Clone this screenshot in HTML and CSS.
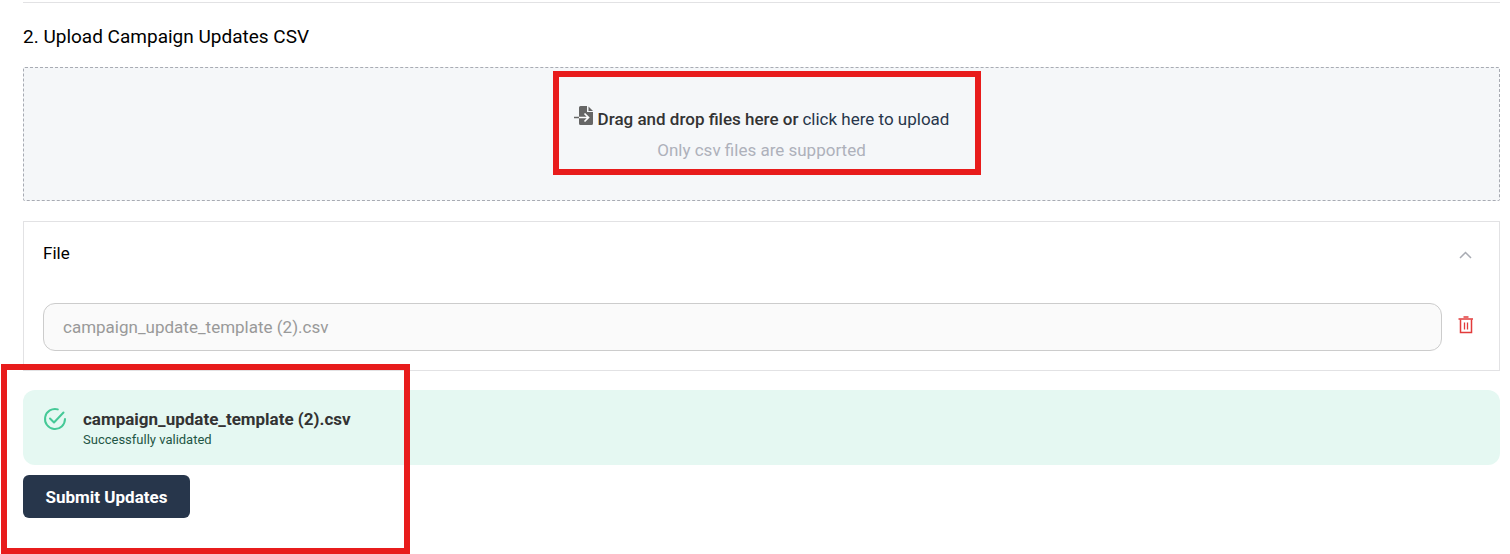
FILE: index.html
```html
<!DOCTYPE html>
<html lang="en">
<head>
  <meta charset="UTF-8" />
  <meta name="viewport" content="width=device-width, initial-scale=1.0"/>
  <title>Upload Campaign Updates</title>
  <link rel="stylesheet" href="styles.css">
</head>
<body>
  <main class="upload-step">
    <h2>2. Upload Campaign Updates CSV</h2>

    <div class="dropzone">
      <div class="drop-text">
        <svg class="import-icon" width="20" height="20" viewBox="0 0 20 20" aria-hidden="true">
          <path d="M6.500 0H13v6h6v11.500a1.500 1.500 0 0 1-1.500 1.500h-11A1.500 1.500 0 0 1 5 17.500v-16A1.500 1.500 0 0 1 6.500 0z" fill="#666"/>
          <path d="M14.500 0.500L19 5h-4.500z" fill="#666"/>
          <path d="M0 11.500h5" stroke="#666" stroke-width="1.500"/>
          <path d="M5 11.500h9M10.500 7.500l4 4-4 4" fill="none" stroke="#fff" stroke-width="1.700"/>
        </svg>
        <strong>Drag and drop files here or</strong>
        <a href="#">click here to upload</a>
      </div>
      <div class="drop-hint">Only csv files are supported</div>
      <div class="highlight highlight-drop"></div>
    </div>

    <section class="file-card">
      <div class="file-header">
        <label for="file-name">File</label>
        <button type="button" class="icon-button" aria-label="Collapse">
          <svg width="14" height="14" viewBox="0 0 14 14">
            <path d="M1 10L6.500 4.500 12 10" fill="none" stroke="#a8abb3" stroke-width="1.500"/>
          </svg>
        </button>
      </div>
      <div class="file-row">
        <input type="text" id="file-name" value="campaign_update_template (2).csv" disabled>
        <button type="button" class="icon-button delete" aria-label="Delete file">
          <svg width="16" height="18" viewBox="0 0 16 18" fill="none" stroke="#e23b3b">
            <path d="M5.500 1h5" stroke-width="1.500"/>
            <path d="M0.500 3h14.500" stroke-width="1.500"/>
            <path d="M2.500 3.500v13h11v-13" stroke-width="1.500"/>
            <path d="M6.500 6.500v7M9.500 6.500v7" stroke-width="1.300"/>
          </svg>
        </button>
      </div>
    </section>

    <div class="result">
      <div class="alert">
        <svg width="24" height="24" viewBox="0 0 24 24" fill="none" stroke="#45c997" stroke-width="2" stroke-linecap="round" stroke-linejoin="round" aria-hidden="true">
          <path d="M14.800 2.400A10 10 0 1 0 22 12"/>
          <path d="M7 11.500l4 4L20.500 5.500"/>
        </svg>
        <div>
          <div class="alert-title">campaign_update_template (2).csv</div>
          <div class="alert-text">Successfully validated</div>
        </div>
      </div>
      <button type="button" class="submit">Submit Updates</button>
      <div class="highlight highlight-result"></div>
    </div>
  </main>
</body>
</html>
```
FILE: styles.css
```css
* {
  box-sizing: border-box;
}
body {
  margin: 0;
  font-family: Roboto, sans-serif;
  font-size: 17px;
  line-height: 24px;
  color: #000;
  background: #fff;
}
.upload-step {
  margin: 2px 10px 0 23px;
  padding-bottom: 36px;
  border-top: 1px solid #e2e2e4;
}
h2 {
  margin: 0;
  padding: 22px 0 18px;
  font-size: 19px;
  line-height: 24px;
  font-weight: 400;
}
.dropzone {
  position: relative;
  height: 134px;
  padding-top: 38px;
  text-align: center;
  background: #f5f7f9;
  border: 1px dashed #a8abb3;
  border-radius: 2px;
}
.drop-text {
  display: flex;
  justify-content: center;
  gap: 4px;
  height: 32px;
  line-height: 26px;
}
.drop-text strong {
  font-weight: 500;
  color: #333;
}
.drop-text a {
  color: #27364b;
  text-decoration: none;
}
.drop-hint {
  color: #aeb1bb;
}
.highlight {
  position: absolute;
  border: 6px solid #e81c1c;
  pointer-events: none;
}
.highlight-drop {
  top: 3px;
  left: calc(50% - 209px);
  width: 428px;
  height: 104px;
}
.file-card {
  margin-top: 20px;
  padding: 19px;
  border: 1px solid #e2e2e4;
}
.file-header {
  display: flex;
  justify-content: space-between;
  align-items: flex-start;
  height: 62px;
}
.file-header .icon-button {
  padding-top: 7px;
}
.file-row {
  display: flex;
  align-items: center;
  gap: 10px;
}
.file-row input {
  flex: 1;
  min-width: 0;
  height: 48px;
  padding: 0 19px;
  font: inherit;
  color: #999;
  background: #fafafa;
  border: 1px solid #ccc;
  border-radius: 12px;
}
.icon-button {
  display: flex;
  justify-content: center;
  width: 28px;
  padding: 0;
  background: none;
  border: 0;
  cursor: pointer;
}
.delete {
  padding-bottom: 4px;
}
.result {
  position: relative;
  margin-top: 19px;
}
.alert {
  display: flex;
  gap: 16px;
  height: 75px;
  padding: 17px 20px;
  background: #e5f8f2;
  border-radius: 12px;
}
.alert-title {
  font-weight: 700;
  color: #333;
}
.alert-text {
  font-size: 13px;
  line-height: 18px;
  color: #1f5645;
}
.submit {
  width: 167px;
  height: 43px;
  margin-top: 10px;
  padding: 0;
  font: inherit;
  font-weight: 700;
  color: #fff;
  background: #27364b;
  border: 0;
  border-radius: 6px;
  cursor: pointer;
}
.highlight-result {
  top: -26px;
  left: -22px;
  width: 409px;
  height: 190px;
}
```
